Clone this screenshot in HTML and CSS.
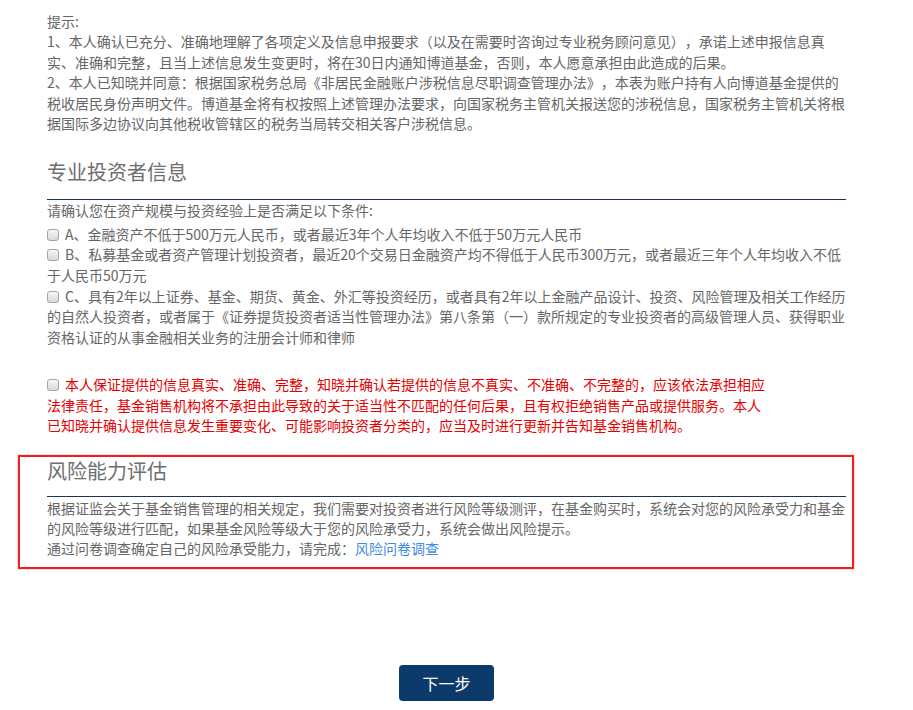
FILE: index.html
```html
<!DOCTYPE html>
<html lang="zh-CN">
<head>
<meta charset="utf-8">
<title>专业投资者信息</title>
<link rel="stylesheet" href="styles.css">
</head>
<body>
<div class="page">
  <div class="tips">
    <p>提示:</p>
    <p>1、本人确认已充分、准确地理解了各项定义及信息申报要求（以及在需要时咨询过专业税务顾问意见），承诺上述申报信息真<br>实、准确和完整，且当上述信息发生变更时，将在30日内通知博道基金，否则，本人愿意承担由此造成的后果。</p>
    <p>2、本人已知晓并同意：根据国家税务总局《非居民金融账户涉税信息尽职调查管理办法》，本表为账户持有人向博道基金提供的<br>税收居民身份声明文件。博道基金将有权按照上述管理办法要求，向国家税务主管机关报送您的涉税信息，国家税务主管机关将根<br>据国际多边协议向其他税收管辖区的税务当局转交相关客户涉税信息。</p>
  </div>

  <section class="section">
    <h2 class="section-title">专业投资者信息</h2>
    <p class="intro">请确认您在资产规模与投资经验上是否满足以下条件:</p>
    <label class="option opt-a"><input type="checkbox" class="check">A、金融资产不低于500万元人民币，或者最近3年个人年均收入不低于50万元人民币</label>
    <label class="option opt-b"><input type="checkbox" class="check">B、私募基金或者资产管理计划投资者，最近20个交易日金融资产均不得低于人民币300万元，或者最近三年个人年均收入不低<br>于人民币50万元</label>
    <label class="option opt-c"><input type="checkbox" class="check">C、具有2年以上证券、基金、期货、黄金、外汇等投资经历，或者具有2年以上金融产品设计、投资、风险管理及相关工作经历<br>的自然人投资者，或者属于《证券提货投资者适当性管理办法》第八条第（一）款所规定的专业投资者的高级管理人员、获得职业<br>资格认证的从事金融相关业务的注册会计师和律师</label>
    <label class="option warning"><input type="checkbox" class="check">本人保证提供的信息真实、准确、完整，知晓并确认若提供的信息不真实、不准确、不完整的，应该依法承担相应<br>法律责任，基金销售机构将不承担由此导致的关于适当性不匹配的任何后果，且有权拒绝销售产品或提供服务。本人<br>已知晓并确认提供信息发生重要变化、可能影响投资者分类的，应当及时进行更新并告知基金销售机构。</label>
  </section>

  <section class="section risk">
    <h2 class="section-title">风险能力评估</h2>
    <p class="intro">根据证监会关于基金销售管理的相关规定，我们需要对投资者进行风险等级测评，在基金购买时，系统会对您的风险承受力和基金<br>的风险等级进行匹配，如果基金风险等级大于您的风险承受力，系统会做出风险提示。</p>
    <p>通过问卷调查确定自己的风险承受能力，请完成：<a class="link" href="#">风险问卷调查</a></p>
  </section>

  <div class="actions">
    <button type="button" class="btn-next">下一步</button>
  </div>
</div>
</body>
</html>
```

FILE: styles.css
```css
html, body {
  margin: 0;
  padding: 0;
  background: #fff;
}

body {
  font-family: "Noto Sans CJK SC", "Microsoft YaHei", sans-serif;
  font-size: 14px;
  color: #666;
  line-height: 20.4px;
  text-spacing-trim: space-all;
}

.page {
  width: 799px;
  padding: 11px 0 0 47px;
}

p {
  margin: 0;
}

.section-title {
  margin: 0;
  font-size: 20px;
  font-weight: normal;
  line-height: 28px;
  color: #6e6e6e;
  padding-bottom: 13px;
  border-bottom: 1px solid #1b3453;
}

.section {
  margin-top: 25px;
}

.option {
  display: block;
}

.opt-a {
  margin-top: 3px;
}

.opt-c {
  margin-top: 1px;
}

.check {
  appearance: none;
  -webkit-appearance: none;
  width: 12px;
  height: 12px;
  margin: 0 6px 0 0;
  border: 1px solid #a4a4a4;
  border-radius: 3px;
  background: linear-gradient(#f6f6f6, #d9d9d9);
  vertical-align: -1px;
  box-sizing: border-box;
}

.warning {
  margin-top: 27px;
  color: #e60000;
}

.risk {
  margin: 19px -8px 0 -29px;
  padding: 0 6px 8px 27px;
  border: 2px solid #ee1f1f;
  box-shadow: 0 0 2px rgba(255, 60, 60, 0.6);
}

.risk .section-title {
  padding-bottom: 11px;
}

.risk .intro {
  margin-top: 1px;
}

.link {
  color: #3d8be0;
  text-decoration: none;
}

.actions {
  display: flex;
  justify-content: center;
  margin-top: 96px;
}

.btn-next {
  width: 95px;
  height: 36px;
  border: none;
  border-radius: 4px;
  background: #0b3a6b;
  color: #fff;
  font-family: "Noto Sans CJK SC", "Microsoft YaHei", sans-serif;
  font-size: 16px;
  cursor: pointer;
}
```
